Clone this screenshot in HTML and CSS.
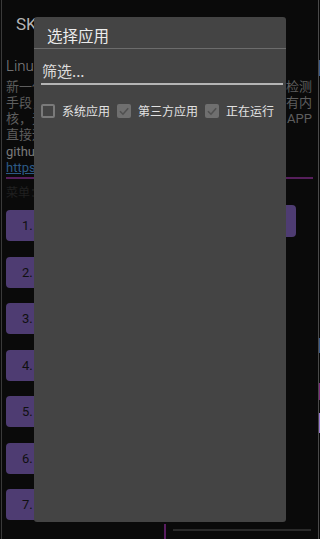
FILE: index.html
```html
<!DOCTYPE html>
<html lang="zh">
<head>
<meta charset="utf-8">
<link rel="stylesheet" href="styles.css">
</head>
<body>
<div class="screen">
  <div class="main">
    <div class="header">SKRoot</div>
    <div class="subtitle">Linux Kernel Root</div>
    <div class="para">
      <div class="pline"><span>新一代内核级隐藏</span><span>检测</span></div>
      <div class="pline"><span>手段，可以发现所</span><span>有内</span></div>
      <div class="pline"><span>核，无需修改</span><span>APP</span></div>
      <div class="pline"><span>直接运行</span></div>
    </div>
    <div class="small">github</div>
    <div class="link">https://github.com</div>
    <div class="rule"></div>
    <div class="menu-label">菜单：</div>
    <div class="menu">
      <div class="col-left">
        <div class="btn">1.</div>
        <div class="btn">2.</div>
        <div class="btn">3.</div>
        <div class="btn">4.</div>
        <div class="btn">5.</div>
        <div class="btn">6.</div>
        <div class="btn">7.</div>
      </div>
      <div class="col-right">
        <div class="btn wide"></div>
      </div>
    </div>
    <div class="bottom">
      <div class="vbar"></div>
      <div class="hline"></div>
    </div>
  </div>
  <div class="edge">
    <div class="e e1"></div>
    <div class="e e2"></div>
    <div class="e e3"></div>
    <div class="e e4"></div>
  </div>
</div>

<div class="dialog">
  <div class="dlg-title">选择应用</div>
  <div class="filter">筛选...</div>
  <div class="checks">
    <span class="cb"></span><span class="cb-label">系统应用</span>
    <span class="cb checked"><svg viewBox="0 0 14 14" width="14" height="14"><path d="M3 7.2 L6 10.2 L11.2 4.2" fill="none" stroke="#505050" stroke-width="1.6"/></svg></span><span class="cb-label">第三方应用</span>
    <span class="cb checked"><svg viewBox="0 0 14 14" width="14" height="14"><path d="M3 7.2 L6 10.2 L11.2 4.2" fill="none" stroke="#505050" stroke-width="1.6"/></svg></span><span class="cb-label">正在运行</span>
  </div>
</div>
</body>
</html>
```
FILE: styles.css
```css
html, body {
  margin: 0;
  padding: 0;
}
body {
  width: 320px;
  height: 539px;
  overflow: hidden;
  background: #0a0a0a;
  font-family: Roboto, "Noto Sans CJK SC", sans-serif;
  position: relative;
}
.screen {
  display: flex;
  height: 539px;
  margin-left: 1px;
  border-left: 1px solid #3a3a3a;
}
.main {
  flex: 1;
  padding: 0 5px 0 4px;
  min-width: 0;
  overflow: hidden;
}
.header {
  margin-top: 14px;
  padding-left: 10px;
  font-size: 17px;
  line-height: 20px;
  color: #b4b4b4;
  white-space: nowrap;
}
.subtitle {
  margin-top: 22px;
  font-size: 15px;
  font-weight: 300;
  line-height: 20px;
  color: #828282;
  white-space: nowrap;
}
.para {
  margin-top: 2.5px;
  font-size: 13px;
  line-height: 16px;
  color: #5e5e5e;
}
.pline {
  display: flex;
  justify-content: space-between;
  padding-right: 1px;
  white-space: nowrap;
}
.small {
  margin-top: 1.5px;
  font-size: 13px;
  line-height: 16px;
  color: #7a7a7a;
}
.link {
  font-size: 13px;
  line-height: 16px;
  color: #2d5a85;
  text-decoration: underline;
  white-space: nowrap;
}
.rule {
  margin-top: 1px;
  height: 2px;
  background: #561f5c;
}
.menu-label {
  margin-top: 6px;
  font-size: 12px;
  line-height: 16px;
  color: #202020;
}
.menu {
  display: flex;
  margin-top: 9px;
}
.col-left {
  display: flex;
  flex-direction: column;
  gap: 15.5px;
}
.btn {
  width: 80px;
  height: 31px;
  border-radius: 4px;
  background: #4e3c72;
  color: #101010;
  font-size: 13px;
  line-height: 31px;
  padding-left: 16px;
  box-sizing: border-box;
}
.col-right {
  margin-left: auto;
  margin-right: 17px;
  margin-top: -5px;
}
.btn.wide {
  width: 110px;
  height: 32px;
  background: #4e3c72;
}
.bottom {
  display: flex;
  margin-top: 4px;
  padding-left: 158px;
}
.vbar {
  width: 2px;
  height: 17px;
  background: #5a1d62;
}
.hline {
  margin-left: 7px;
  margin-top: 5px;
  width: 138px;
  height: 2px;
  background: #2a2a2a;
}
.edge {
  width: 1px;
  border-left: 1px solid #4a4a4a;
  display: flex;
  flex-direction: column;
}
.e { width: 1px; }
.e1 { margin-top: 60px; height: 16px; background: #3a5a8a; }
.e2 { margin-top: 262px; height: 15px; background: #3a5a8a; }
.e3 { margin-top: 30px; height: 17px; background: #7a2a7a; }
.e4 { margin-top: 13px; height: 20px; background: #9a7ad0; }

.dialog {
  position: absolute;
  left: 34px;
  top: 17px;
  width: 252px;
  height: 505px;
  background: #444444;
  border-radius: 3px;
  font-family: "Noto Sans CJK SC", sans-serif;
}
.dlg-title {
  height: 27px;
  padding-top: 4px;
  border-bottom: 1px solid #6c6c6c;
  padding-left: 13px;
  font-size: 15.5px;
  line-height: 20px;
  display: flex;
  align-items: center;
  color: #ececec;
}
.filter {
  margin: 0 3px 0 7px;
  padding: 12px 0 2px 1px;
  height: 20px;
  font-size: 15px;
  line-height: 20px;
  color: #dcdcdc;
  border-bottom: 2px solid #b5b5b5;
}
.checks {
  display: flex;
  align-items: center;
  margin: 19px 0 0 7px;
  height: 14px;
}
.cb {
  width: 14px;
  height: 14px;
  box-sizing: border-box;
  border: 2px solid #7a7a7a;
  border-radius: 2px;
  flex: none;
  display: flex;
}
.cb.checked {
  border: none;
  background: #6f6f6f;
}
.cb-label {
  margin: 0 7px;
  font-size: 12px;
  line-height: 14px;
  color: #e2e2e2;
  white-space: nowrap;
}
```
